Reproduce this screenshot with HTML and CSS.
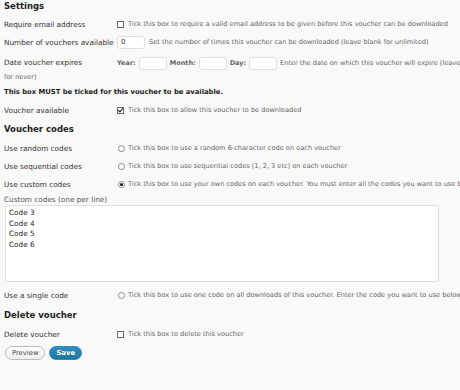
FILE: index.html
```html
<!DOCTYPE html>
<html lang="en">
<head>
    <meta charset="UTF-8">
    <meta name="viewport" content="width=device-width, initial-scale=1.0">
    <title>Voucher settings</title>
    <link rel="stylesheet" href="styles.css">
</head>
<body>
<form class="page">
    <h3>Settings</h3>
    <div class="row">
        <label class="name">Require email address</label>
        <input type="checkbox" class="check">
        <span class="desc">Tick this box to require a valid email address to be given before this voucher can be downloaded</span>
    </div>
    <div class="row">
        <label class="name">Number of vouchers available</label>
        <input type="text" class="num" value="0">
        <span class="desc">Set the number of times this voucher can be downloaded (leave blank for unlimited)</span>
    </div>
    <div class="row-date"><label class="name">Date voucher expires</label><span class="part">Year:</span><input type="text" class="num"><span class="part">Month:</span><input type="text" class="num"><span class="part">Day:</span><input type="text" class="num"><span class="desc">Enter the date on which this voucher will expire (leave blank for&nbsp;never)</span></div>
    <p class="note">This box MUST be ticked for this voucher to be available.</p>
    <div class="row">
        <label class="name">Voucher available</label>
        <input type="checkbox" class="check" checked>
        <span class="desc">Tick this box to allow this voucher to be downloaded</span>
    </div>

    <h3 class="sub">Voucher codes</h3>
    <div class="row">
        <label class="name">Use random codes</label>
        <input type="radio" name="codes" class="radio">
        <span class="desc">Tick this box to use a random 6-character code on each voucher</span>
    </div>
    <div class="row">
        <label class="name">Use sequential codes</label>
        <input type="radio" name="codes" class="radio">
        <span class="desc">Tick this box to use sequential codes (1, 2, 3 etc) on each voucher</span>
    </div>
    <div class="row">
        <label class="name">Use custom codes</label>
        <input type="radio" name="codes" class="radio" checked>
        <span class="desc">Tick this box to use your own codes on each voucher. You must enter all the codes you want to use below:</span>
    </div>
    <label class="codes-label">Custom codes (one per line)</label>
    <textarea class="codes">Code 3
Code 4
Code 5
Code 6</textarea>
    <div class="row single">
        <label class="name">Use a single code</label>
        <input type="radio" name="codes" class="radio">
        <span class="desc">Tick this box to use one code on all downloads of this voucher. Enter the code you want to use below:</span>
    </div>

    <h3 class="del">Delete voucher</h3>
    <div class="row">
        <label class="name">Delete voucher</label>
        <input type="checkbox" class="check">
        <span class="desc">Tick this box to delete this voucher</span>
    </div>
    <div class="buttons">
        <button type="button" class="btn">Preview</button>
        <button type="submit" class="btn primary">Save</button>
    </div>
</form>
</body>
</html>
```

FILE: styles.css
```css
html, body {
    margin: 0;
    background: #f9f9f9;
    overflow: hidden;
}
body {
    font-family: "DejaVu Sans", Verdana, sans-serif;
    color: #333;
}
.page {
    width: 488px;
    padding: 0 0 0 4px;
}
h3 {
    font-size: 8.5px;
    line-height: 12px;
    margin: 0 0 3px;
    color: #222;
}
h3.sub {
    margin: 4px 0 4px;
}
h3.del {
    margin: 5px 0 4px;
}
.row {
    display: flex;
    align-items: center;
    height: 18px;
    white-space: nowrap;
}
.row.single {
    margin-top: 4px;
}
.name {
    display: inline-block;
    width: 113px;
    font-size: 7.3px;
    color: #333;
    flex: none;
}
.desc {
    font-size: 6.6px;
    color: #666;
}
.check, .radio {
    appearance: none;
    width: 7px;
    height: 7px;
    margin: 0 4px 0 0;
    border: 1px solid #666;
    background: #fff;
    box-sizing: border-box;
    flex: none;
    position: relative;
}
.radio {
    border-radius: 50%;
    border-color: #888;
    margin-left: 1px;
    margin-right: 3px;
}
.check:checked::after {
    content: "";
    position: absolute;
    left: 1px;
    top: -1px;
    width: 2px;
    height: 4px;
    border: solid #111;
    border-width: 0 1.5px 1.5px 0;
    transform: rotate(40deg);
}
.radio:checked::after {
    content: "";
    position: absolute;
    left: 1px;
    top: 1px;
    width: 3px;
    height: 3px;
    border-radius: 50%;
    background: #111;
}
.num {
    width: 28px;
    height: 13px;
    box-sizing: border-box;
    border: 1px solid #dfdfdf;
    border-radius: 3px;
    background: #fff;
    font-family: inherit;
    font-size: 7px;
    color: #333;
    padding: 0 3px;
    margin: 0 4px 0 0;
    vertical-align: middle;
}
.row-date {
    font-size: 7px;
    line-height: 14px;
    padding: 5px 0 3px;
}
.row-date .name {
    vertical-align: middle;
}
.part {
    font-size: 6.5px;
    font-weight: bold;
    color: #666;
    vertical-align: middle;
    margin-right: 3px;
}
.row-date .num {
    margin-right: 3px;
}
.row-date .desc {
    vertical-align: middle;
}
.note {
    font-size: 6.8px;
    font-weight: bold;
    line-height: 10px;
    margin: 0 0 4px;
    color: #222;
}
.codes-label {
    display: block;
    font-size: 7.3px;
    line-height: 10px;
    margin-top: 2px;
    color: #555;
}
.codes {
    display: block;
    width: 434px;
    height: 77px;
    box-sizing: border-box;
    margin: 0 0 0 1px;
    padding: 2px 3px;
    border: 1px solid #dfdfdf;
    border-radius: 3px;
    background: #fff;
    font-family: inherit;
    font-size: 7.3px;
    line-height: 10.5px;
    color: #222;
    resize: none;
}
.buttons {
    display: flex;
    gap: 4px;
    margin: 3px 0 0 1px;
}
.btn {
    height: 14px;
    padding: 0 6px;
    border: 1px solid #bbb;
    border-radius: 8px;
    background: linear-gradient(#fff, #ededed);
    font-family: inherit;
    font-size: 6.8px;
    color: #464646;
}
.btn.primary {
    border-color: #298cba;
    background: linear-gradient(#2e8fc1, #21759b);
    color: #fff;
    font-weight: bold;
}
```
